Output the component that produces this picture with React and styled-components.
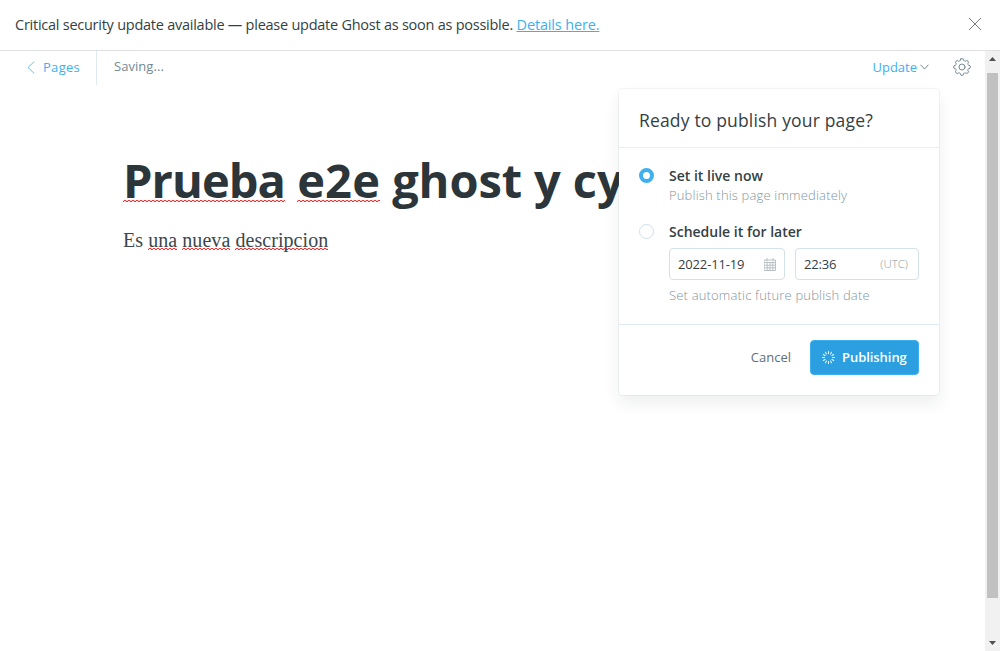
import React from 'react';
import styled, { createGlobalStyle } from 'styled-components';

const GlobalStyle = createGlobalStyle`
  * { box-sizing: border-box; }
  body { margin: 0; background: #fff; color: #343f44; font-family: "Open Sans", "Noto Sans", sans-serif; }
`;

const Page = styled.div`
  display: flex;
  flex-direction: column;
  height: 651px;
  overflow: hidden;
`;

const Alert = styled.aside`
  display: flex;
  flex: none;
  align-items: center;
  justify-content: space-between;
  height: 51px;
  padding: 0 18px 2px 15px;
  border-bottom: 1px solid #dedfe0;
  font-size: 14.5px;
  letter-spacing: -0.25px;
  white-space: nowrap;
`;

const AlertLink = styled.a`
  color: #3eb0ef;
  text-decoration: underline;
  letter-spacing: -0.15px;
`;

const Icon = styled.svg`
  display: block;
  flex: none;
  fill: none;
  stroke: ${(p) => p.$color};
  stroke-width: ${(p) => p.$weight || 1};
  stroke-linecap: round;
  stroke-linejoin: round;
`;

const Workspace = styled.main`
  display: flex;
  flex: 1;
  min-height: 0;
`;

const Editor = styled.section`
  position: relative;
  flex: 1;
  min-width: 0;
  overflow: hidden;
`;

const Toolbar = styled.header`
  display: flex;
  height: 34px;
  font-size: 13px;
  line-height: 32px;
`;

const BackLink = styled.a`
  display: flex;
  align-items: center;
  gap: 8px;
  width: 97px;
  padding: 0 0 2px 27px;
  border-right: 1px solid #dfe9f0;
  color: #3eb0ef;
  letter-spacing: 0.3px;
`;

const Status = styled.span`
  padding-left: 17px;
  line-height: 31px;
  color: #738a94;
  letter-spacing: 0.05px;
`;

const Actions = styled.div`
  display: flex;
  align-items: center;
  gap: 24px;
  margin-left: auto;
  padding: 0 14px 2px 0;
`;

const UpdateTrigger = styled.a`
  display: flex;
  align-items: center;
  gap: 3px;
  color: #3eb0ef;
`;

const Content = styled.article`
  padding: 61px 0 0 123px;
  white-space: nowrap;
`;

const Title = styled.h1`
  margin: 0;
  font-size: 47px;
  font-weight: 700;
  line-height: 68px;
  letter-spacing: -0.1px;
  color: #2b353a;
`;

const Body = styled.p`
  margin: 13px 0 0;
  font: 20px/26px "Liberation Serif", serif;
  letter-spacing: 0.06px;
  color: #3b474d;
`;

const Misspelled = styled.span`
  letter-spacing: ${(p) => p.$tracking || 0.06}px;
  background-image:
    linear-gradient(45deg, transparent 60%, #f22 72%, transparent 90%),
    linear-gradient(135deg, transparent 10%, #f22 28%, transparent 40%);
  background-repeat: repeat-x;
  background-position: 0 ${(p) => p.$drop}px;
  background-size: 4px 3px;
`;

const Popover = styled.section`
  position: absolute;
  top: 38px;
  right: 46px;
  width: 320px;
  height: 306px;
  border-radius: 4px;
  background: #fff;
  box-shadow: 0 0 0 1px rgba(99, 114, 130, 0.07), 0 8px 16px rgba(27, 39, 51, 0.08);
`;

const PopoverTitle = styled.h2`
  height: 59px;
  margin: 0;
  padding: 0 20px;
  border-bottom: 1px solid #e5eff5;
  font-size: 17.5px;
  font-weight: 400;
  letter-spacing: 0.17px;
  line-height: 62px;
`;

const Options = styled.div`
  height: 177px;
  padding: 18px 20px 0;
  border-bottom: 1px solid #dfebf3;
`;

const Option = styled.div`
  display: grid;
  grid-template-columns: 15px 1fr;
  column-gap: 15px;
  margin-bottom: 16px;
`;

const Radio = styled.span`
  width: 15px;
  height: 15px;
  margin-top: 2px;
  border: ${(p) => (p.$checked ? '4px solid #3eb0ef' : '1px solid #cfdfe9')};
  border-radius: 50%;
`;

const OptionTitle = styled.div`
  height: 20px;
  font-size: 14px;
  font-weight: 600;
  line-height: 20px;
`;

const Hint = styled.div`
  height: 20px;
  font-size: 13px;
  font-weight: 300;
  letter-spacing: 0.17px;
  line-height: 19px;
  color: #8296a0;
`;

const Fields = styled.div`
  display: flex;
  gap: 10px;
  margin: 6px 0;
`;

const Field = styled.div`
  display: flex;
  align-items: center;
  justify-content: space-between;
  width: ${(p) => p.$width}px;
  height: 32px;
  padding: 0 ${(p) => p.$end}px 0 8px;
  border: 1px solid #d3e1ea;
  border-radius: 4px;
  font-size: 13px;
  letter-spacing: -0.15px;
`;

const Zone = styled.small`
  padding-bottom: 1px;
  font-size: 11.5px;
  font-weight: 300;
  letter-spacing: 0;
  color: #8b9ba4;
`;

const Footer = styled.footer`
  display: flex;
  justify-content: flex-end;
  gap: 19px;
  padding: 15px 20px 0 0;
  font-size: 13px;
  line-height: 35px;
`;

const Cancel = styled.span`
  color: #5c717b;
`;

const Publish = styled.button`
  display: flex;
  align-items: center;
  gap: 6px;
  width: 109px;
  height: 35px;
  padding: 0 0 0 10px;
  border: 1px solid #3eb0ef;
  border-radius: 4px;
  background: #2b9fe0;
  color: #fff;
  font: 600 13px/33px "Open Sans", "Noto Sans", sans-serif;
  letter-spacing: -0.05px;
`;

const Scrollbar = styled.div`
  display: flex;
  flex: none;
  flex-direction: column;
  align-items: center;
  width: 15px;
  background: #f1f1f1;
`;

const ScrollArrow = styled.svg`
  display: block;
  width: 15px;
  height: ${(p) => p.$height}px;
  fill: #505050;
`;

const Thumb = styled.div`
  width: 11px;
  height: 525px;
  margin-bottom: auto;
  background: #c1c1c1;
`;

const SPOKES = Array.from({ length: 12 }, (_, i) => i * 30);

// Outline of an eight-toothed cog centred in an 18px box.
const COG = (() => {
  const point = (radius, degrees) => {
    const a = (degrees * Math.PI) / 180;
    return `${(9 + radius * Math.sin(a)).toFixed(2)} ${(9 - radius * Math.cos(a)).toFixed(2)}`;
  };
  let d = `M${point(8.1, -9)}`;
  for (let i = 0; i < 8; i += 1) {
    const a = i * 45;
    d += `Q${point(8.7, a)} ${point(8.1, a + 9)}L${point(6.9, a + 14)}Q${point(5.9, a + 22.5)} ${point(6.9, a + 31)}L${point(8.1, a + 36)}`;
  }
  return `${d}z`;
})();

export default function App() {
  return (
    <Page>
      <GlobalStyle />
      <Alert>
        <span>
          Critical security update available — please update Ghost as soon as possible.{' '}
          <AlertLink>Details here.</AlertLink>
        </span>
        <Icon $color="#666d71" $weight="0.9" width="14" height="14" viewBox="0 0 14 14">
          <path d="M1.2 1.2l11.6 11.6M12.8 1.2L1.2 12.8" />
        </Icon>
      </Alert>
      <Workspace>
        <Editor>
          <Toolbar>
            <BackLink>
              <Icon $color="#67c0f2" width="8" height="13" viewBox="0 0 8 13">
                <path d="M7 .8L1 6.5l6 5.7" />
              </Icon>
              Pages
            </BackLink>
            <Status>Saving...</Status>
            <Actions>
              <UpdateTrigger>
                Update
                <Icon $color="#738a94" width="9" height="6" viewBox="0 0 9 6">
                  <path d="M.8 1l3.7 4L8.2 1" />
                </Icon>
              </UpdateTrigger>
              <Icon $color="#738a94" width="18" height="18" viewBox="0 0 18 18">
                <circle cx="9" cy="9" r="3" />
                <path d={COG} />
              </Icon>
            </Actions>
          </Toolbar>
          <Content>
            <Title>
              <Misspelled $tracking={-0.93} $drop={52}>Prueba</Misspelled>{' '}
              <Misspelled $tracking={0.15} $drop={52}>e2e</Misspelled> ghost y cypress
            </Title>
            <Body>
              Es <Misspelled $drop={19}>una</Misspelled> <Misspelled $drop={19}>nueva</Misspelled>{' '}
              <Misspelled $drop={19}>descripcion</Misspelled>
            </Body>
          </Content>
          <Popover>
            <PopoverTitle>Ready to publish your page?</PopoverTitle>
            <Options>
              <Option>
                <Radio $checked />
                <div>
                  <OptionTitle>Set it live now</OptionTitle>
                  <Hint>Publish this page immediately</Hint>
                </div>
              </Option>
              <Option>
                <Radio />
                <div>
                  <OptionTitle>Schedule it for later</OptionTitle>
                  <Fields>
                    <Field $width={116} $end={8}>
                      2022-11-19
                      <Icon $color="#b4bcc0" $weight="0.9" width="12" height="13" viewBox="0 0 12 13">
                        <path d="M.5 2h11v10.5H.5zM.5 4.5h11M.5 7.2h11M.5 9.8h11M3.2 4.5v8M6 4.5v8M8.8 4.5v8M3 .5V3M9 .5V3" />
                      </Icon>
                    </Field>
                    <Field $width={124} $end={10}>
                      22:36
                      <Zone>(UTC)</Zone>
                    </Field>
                  </Fields>
                  <Hint>Set automatic future publish date</Hint>
                </div>
              </Option>
            </Options>
            <Footer>
              <Cancel>Cancel</Cancel>
              <Publish>
                <Icon $color="#fff" width="15" height="15" viewBox="0 0 15 15">
                  {SPOKES.map((angle) => (
                    <path key={angle} d="M7.5 1.5v2" transform={`rotate(${angle} 7.5 7.5)`} />
                  ))}
                </Icon>
                Publishing
              </Publish>
            </Footer>
          </Popover>
        </Editor>
        <Scrollbar>
          <ScrollArrow $height={22} viewBox="0 0 15 22">
            <path d="M4 10l3.5-4 3.5 4z" />
          </ScrollArrow>
          <Thumb />
          <ScrollArrow $height={17} viewBox="0 0 15 17">
            <path d="M4 7l3.5 4L11 7z" />
          </ScrollArrow>
        </Scrollbar>
      </Workspace>
    </Page>
  );
}
